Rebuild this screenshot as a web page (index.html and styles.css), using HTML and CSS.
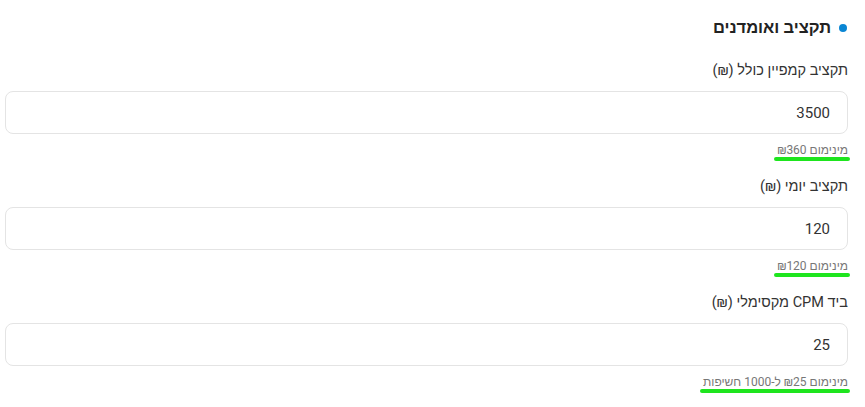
FILE: index.html
```html
<!DOCTYPE html>
<html lang="he" dir="rtl">

<head>
    <meta charset="UTF-8">
    <meta name="viewport" content="width=device-width, initial-scale=1.0">
    <title>תקציב ואומדנים</title>
    <link rel="stylesheet" href="styles.css">
</head>

<body>
    <div class="section">
        <h2 class="title"><span class="dot"></span>תקציב ואומדנים</h2>

        <div class="field">
            <label class="label" for="total">תקציב קמפיין כולל (₪)</label>
            <input class="input" id="total" type="text" value="3500">
            <div class="hint"><span class="mark">מינימום ₪360</span></div>
        </div>

        <div class="field">
            <label class="label" for="daily">תקציב יומי (₪)</label>
            <input class="input" id="daily" type="text" value="120">
            <div class="hint"><span class="mark">מינימום ₪120</span></div>
        </div>

        <div class="field">
            <label class="label" for="cpm">ביד CPM מקסימלי (₪)</label>
            <input class="input" id="cpm" type="text" value="25">
            <div class="hint"><span class="mark">מינימום ₪25 ל-1000 חשיפות</span></div>
        </div>
    </div>
</body>

</html>
```

FILE: styles.css
```css
body {
    margin: 0;
    background-color: #fff;
    font-family: Roboto, "Liberation Sans", Arial, sans-serif;
    color: #333;
}

.section {
    padding: 16px 17px 0 5px;
}

.title {
    display: flex;
    align-items: center;
    gap: 8px;
    margin: 0 0 21px 0;
    padding-right: 1px;
    font-size: 16.5px;
    line-height: 24px;
    font-weight: 700;
    color: #222;
}

.dot {
    width: 8px;
    height: 8px;
    border-radius: 50%;
    background-color: #0a86d4;
}

.field {
    display: flex;
    flex-direction: column;
    margin-bottom: 16px;
}

.label {
    font-size: 14.5px;
    line-height: 20px;
    color: #333;
    margin-bottom: 10px;
}

.input {
    box-sizing: border-box;
    height: 43px;
    padding: 0 17px;
    border: 1px solid #e4e4e4;
    border-radius: 8px;
    background-color: #fff;
    font-family: Roboto, "Liberation Sans", Arial, sans-serif;
    font-size: 15px;
    color: #333;
    text-align: right;
    outline: none;
}

.hint {
    margin-top: 8px;
    font-size: 12px;
    line-height: 16px;
    color: #777;
}

.mark {
    position: relative;
    display: inline-block;
    padding-bottom: 3px;
}

.mark::after {
    content: "";
    position: absolute;
    left: -3px;
    right: -2px;
    bottom: 0;
    height: 4px;
    border-radius: 2px;
    background-color: #1ee51e;
}
```
